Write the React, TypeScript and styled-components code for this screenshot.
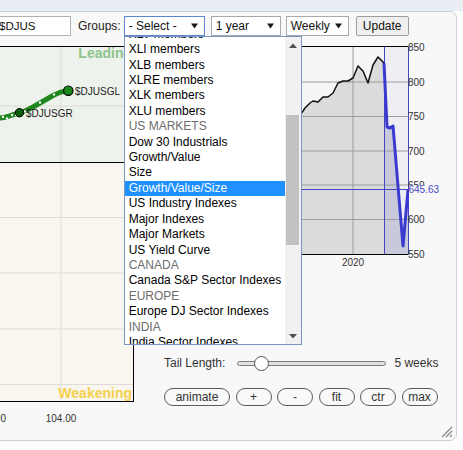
import React from "react";
import styled, { createGlobalStyle } from "styled-components";

const GlobalStyle = createGlobalStyle`
  html, body { margin: 0; padding: 0; }
  body {
    width: 463px;
    height: 450px;
    overflow: hidden;
    background: #fdfdfd;
    font-family: "Liberation Sans", Arial, sans-serif;
    font-size: 12px;
    color: #222;
  }
  * { box-sizing: border-box; }
`;

const TopStrip = styled.div`
  height: 11px;
  background: #e9eef4;
`;

const Card = styled.div`
  position: relative;
  margin: 0 6px 0 -10px;
  border: 1px solid #cdd1d6;
  border-radius: 7px;
  background: #f8f8f9;
  padding: 4px 0 10px 4px;
`;

const Toolbar = styled.div`
  display: flex;
  align-items: stretch;
  height: 20px;
`;

const TextInput = styled.div`
  width: 76px;
  border: 1px solid #b1b1b1;
  background: #fff;
  padding: 0 0 0 3px;
  line-height: 18px;
  font-size: 11.5px;
  color: #111;
  white-space: nowrap;
  overflow: hidden;
`;

const Label = styled.span<{ $ml: number }>`
  margin-left: ${(p) => p.$ml}px;
  line-height: 20px;
  color: #222;
  white-space: nowrap;
`;

const SelectWrap = styled.div<{ $ml: number }>`
  position: relative;
  margin-left: ${(p) => p.$ml}px;
  display: flex;
`;

const SelectBox = styled.div<{ $w: number; $focus?: boolean }>`
  width: ${(p) => p.$w}px;
  border: 1px solid ${(p) => (p.$focus ? "#5b86d3" : "#a9a9a9")};
  background: #fff;
  display: flex;
  align-items: center;
  justify-content: space-between;
  padding: 0 6px 0 4px;
  color: #111;
  white-space: nowrap;
`;

const Caret = () => (
  <svg width="7" height="6" viewBox="0 0 7 6">
    <path d="M0 0.5 L7 0.5 L3.5 5.5 Z" fill="#1a1a1a" />
  </svg>
);

const UpdateButton = styled.div`
  margin-left: 7px;
  width: 53px;
  border: 1px solid #9d9d9d;
  border-radius: 2px;
  background: #efefef;
  display: flex;
  align-items: center;
  justify-content: center;
  color: #111;
`;

const Dropdown = styled.div`
  position: absolute;
  top: 20px;
  left: 0;
  width: 178px;
  height: 309px;
  border: 1px solid #7b95c2;
  background: #fff;
  display: flex;
  z-index: 10;
`;

const ListCol = styled.div`
  width: 160px;
  overflow: hidden;
`;

const List = styled.div`
  margin-top: -10.2px;
`;

const Option = styled.div<{ $header?: boolean; $active?: boolean }>`
  height: 15.42px;
  line-height: 15.42px;
  padding-left: 4px;
  font-size: 12px;
  white-space: nowrap;
  color: ${(p) => (p.$active ? "#fff" : p.$header ? "#6d6d6d" : "#000")};
  background: ${(p) => (p.$active ? "#1e90ff" : "transparent")};
`;

const ScrollBar = styled.div`
  width: 16px;
  background: #f1f1f1;
  display: flex;
  flex-direction: column;
`;

const ScrollArrow = styled.div`
  height: 16px;
  display: flex;
  align-items: center;
  justify-content: center;
`;

const ScrollTrack = styled.div`
  flex: 1;
`;

const ScrollThumb = styled.div`
  margin: 62px 2px 0 1px;
  height: 130px;
  background: #c1c1c1;
`;

const ChartArea = styled.div`
  display: flex;
  align-items: flex-start;
`;

const LeftChartSvg = styled.svg`
  display: block;
  flex: none;
`;

const RightColumn = styled.div`
  flex: 1;
  display: flex;
  flex-direction: column;
`;

const RightChartSvg = styled.svg`
  display: block;
`;

const Controls = styled.div`
  margin-top: 81px;
  padding-left: 24px;
  display: flex;
  flex-direction: column;
`;

const TailRow = styled.div`
  display: flex;
  align-items: center;
  height: 20px;
  color: #333;
`;

const SliderTrack = styled.div`
  position: relative;
  margin-left: 12px;
  width: 149px;
  height: 5px;
  border: 1px solid #7c7c7c;
  border-radius: 3px;
  background: #e2e2e2;
`;

const SliderThumb = styled.div`
  position: absolute;
  top: -6px;
  width: 15px;
  height: 15px;
  border-radius: 50%;
  border: 1px solid #555;
  background: #fff;
`;

const TailValue = styled.span`
  margin-left: 8px;
  color: #333;
`;

const ButtonRow = styled.div`
  margin-top: 15px;
  display: flex;
  gap: 5.5px;
`;

const PillButton = styled.div<{ $w: number }>`
  width: ${(p) => p.$w}px;
  height: 18px;
  border: 1px solid #5a5a5a;
  border-radius: 9px;
  background: #f9f9f9;
  display: flex;
  align-items: center;
  justify-content: center;
  color: #333;
  font-size: 12px;
`;

const Grip = styled.svg`
  position: absolute;
  right: 3px;
  bottom: 2px;
`;

type Opt = { label: string; header?: boolean; active?: boolean };

const options: Opt[] = [
  { label: "XLV members" },
  { label: "XLI members" },
  { label: "XLB members" },
  { label: "XLRE members" },
  { label: "XLK members" },
  { label: "XLU members" },
  { label: "US MARKETS", header: true },
  { label: "Dow 30 Industrials" },
  { label: "Growth/Value" },
  { label: "Size" },
  { label: "Growth/Value/Size", active: true },
  { label: "US Industry Indexes" },
  { label: "Major Indexes" },
  { label: "Major Markets" },
  { label: "US Yield Curve" },
  { label: "CANADA", header: true },
  { label: "Canada S&P Sector Indexes" },
  { label: "EUROPE", header: true },
  { label: "Europe DJ Sector Indexes" },
  { label: "INDIA", header: true },
  { label: "India Sector Indexes" },
];

const FONT = '"Liberation Sans", Arial, sans-serif';

/* ---------- Left RRG chart (svg coords: sx = X + 5, sy = Y - 36) ---------- */
const LX = (x: number) => x + 5;
const LY = (y: number) => y - 36;

const tail: [number, number][] = [
  [-5, 119.5], [0, 118], [4, 117.5], [8, 116.5], [12, 115], [16, 114],
  [19.5, 112.7], [26, 110.5], [33, 107], [40, 103], [47, 99], [54, 95],
  [61, 92], [68.3, 90.7],
];
const tailDots: [number, number][] = [
  [3, 117], [7, 118.5], [12, 115], [16, 115], [25, 111.5], [40, 102.5], [54, 94.5],
];

const LeftChart = () => {
  const pts = tail.map(([x, y]) => `${LX(x)},${LY(y)}`).join(" ");
  const hGrid = [106, 217.5, 273, 329, 384.5];
  return (
    <LeftChartSvg width={145} height={394} viewBox="0 0 145 394">
      <rect x={0} y={LY(46.5)} width={LX(133.5)} height={116} fill="#eef2ec" />
      <rect x={0} y={LY(162.5)} width={LX(133.5)} height={239} fill="#f9f6ef" />
      {hGrid.map((y) => (
        <line key={y} x1={0} x2={LX(133.5)} y1={LY(y)} y2={LY(y)} stroke="#dddbd5" strokeWidth={1} />
      ))}
      <line x1={LX(61)} x2={LX(61)} y1={LY(46.5)} y2={LY(401.5)} stroke="#dddbd5" strokeWidth={1} />
      <line x1={0} x2={LX(133.5)} y1={LY(46.5)} y2={LY(46.5)} stroke="#000" strokeWidth={1} />
      <line x1={0} x2={LX(133.5)} y1={LY(162.5)} y2={LY(162.5)} stroke="#000" strokeWidth={1} />
      <line x1={0} x2={LX(134)} y1={LY(401.5)} y2={LY(401.5)} stroke="#000" strokeWidth={1} />
      <line x1={LX(133.5)} x2={LX(133.5)} y1={LY(46.5)} y2={LY(401.5)} stroke="#000" strokeWidth={1} />
      <text x={LX(132)} y={LY(58)} textAnchor="end" fontFamily={FONT} fontSize={14} fontWeight="bold" fill="#8cc48c">
        Leading
      </text>
      <text x={LX(132)} y={LY(397.5)} textAnchor="end" fontFamily={FONT} fontSize={14} fontWeight="bold" fill="#f4d04c">
        Weakening
      </text>
      <polyline points={pts} fill="none" stroke="#1d861d" strokeWidth={5} strokeLinecap="round" strokeLinejoin="round" />
      {tailDots.map(([x, y], i) => (
        <circle key={i} cx={LX(x)} cy={LY(y)} r={1.2} fill="#fff" />
      ))}
      <circle cx={LX(19.5)} cy={LY(112.7)} r={4.2} fill="#0b5e0b" stroke="#000" strokeWidth={1} />
      <circle cx={LX(68.3)} cy={LY(90.7)} r={4.7} fill="#1b8a1b" stroke="#000" strokeWidth={1.2} />
      <text x={LX(75)} y={LY(94.5)} fontFamily={FONT} fontSize={10} fill="#222">$DJUSGL</text>
      <text x={LX(26)} y={LY(116.5)} fontFamily={FONT} fontSize={10} fill="#222">$DJUSGR</text>
      <text x={LX(6)} y={LY(421.5)} textAnchor="end" fontFamily={FONT} fontSize={10} fill="#333">102.00</text>
      <text x={LX(61)} y={LY(421.5)} textAnchor="middle" fontFamily={FONT} fontSize={10} fill="#333">104.00</text>
    </LeftChartSvg>
  );
};

/* ---------- Right price chart (svg coords: sx = X - 140, sy = Y - 36) ---------- */
const RX = (x: number) => x - 140;
const RY = (y: number) => y - 36;

const blackLine: [number, number][] = [
  [145, 160], [160, 150], [175, 141], [190, 145], [205, 135], [220, 128], [235, 122],
  [250, 126], [265, 118], [280, 115], [295, 113], [302, 112.7], [305, 108], [310, 103],
  [313, 101], [318, 102], [323, 97], [328, 97], [333, 93], [338, 83], [343, 81], [348, 81],
  [353, 78], [358, 66], [363, 71], [368, 83], [373, 65], [378, 57], [384, 63],
];
const blueLine: [number, number][] = [
  [384, 63], [387, 127], [390, 128], [393, 126], [403, 246], [408, 190],
];

const RightChart = () => {
  const bPts = blackLine.map(([x, y]) => `${RX(x)},${RY(y)}`).join(" ");
  const uPts = blueLine.map(([x, y]) => `${RX(x)},${RY(y)}`).join(" ");
  const bottom = RY(254);
  const bFill = `${RX(145)},${bottom} ${bPts} ${RX(384)},${bottom}`;
  const uFill = `${RX(384)},${bottom} ${uPts} ${RX(408)},${bottom}`;
  const ticks: [string, number][] = [
    ["850", 47], ["800", 82], ["750", 116.5], ["700", 151], ["650", 185], ["600", 219.5], ["550", 254],
  ];
  return (
    <RightChartSvg width={316} height={236} viewBox="0 0 316 236">
      <rect x={RX(145)} y={RY(46.5)} width={263} height={207.5} fill="#f5f5f5" />
      <rect x={RX(384)} y={RY(46.5)} width={24} height={207.5} fill="#eeeef3" />
      <polygon points={bFill} fill="#dbdbdb" />
      <polygon points={uFill} fill="#c9cad9" />
      {[82, 116.5, 151, 185, 219.5].map((y) => (
        <line key={y} x1={RX(145)} x2={RX(408)} y1={RY(y)} y2={RY(y)} stroke="#9c9c9c" strokeWidth={1} />
      ))}
      <line x1={RX(353)} x2={RX(353)} y1={RY(46.5)} y2={RY(254)} stroke="#9c9c9c" strokeWidth={1} />
      <line x1={RX(145)} x2={RX(408.5)} y1={RY(46.5)} y2={RY(46.5)} stroke="#000" strokeWidth={1.2} />
      <line x1={RX(145)} x2={RX(408.5)} y1={RY(254.5)} y2={RY(254.5)} stroke="#000" strokeWidth={1.2} />
      <line x1={RX(384.5)} x2={RX(384.5)} y1={RY(46.5)} y2={RY(254.5)} stroke="#4545c4" strokeWidth={1} />
      <line x1={RX(408.5)} x2={RX(408.5)} y1={RY(46.5)} y2={RY(254.5)} stroke="#4545c4" strokeWidth={1} />
      <line x1={RX(145)} x2={RX(408.5)} y1={RY(189.5)} y2={RY(189.5)} stroke="#4545c4" strokeWidth={1} />
      <polyline points={bPts} fill="none" stroke="#111" strokeWidth={1.5} strokeLinejoin="round" />
      <polyline points={uPts} fill="none" stroke="#3a3ad0" strokeWidth={3} strokeLinejoin="round" />
      {ticks.map(([t, y]) => (
        <text key={t} x={RX(408)} y={RY(y + 3.6)} fontFamily={FONT} fontSize={10} fill="#333">
          {t}
        </text>
      ))}
      <rect x={RX(409)} y={RY(185.5)} width={34} height={8.5} fill="#f8f8f9" />
      <text x={RX(408.5)} y={RY(193)} fontFamily={FONT} fontSize={10} fill="#4a4ac4">645.63</text>
      <text x={RX(353)} y={RY(265.5)} textAnchor="middle" fontFamily={FONT} fontSize={10} fill="#333">2020</text>
    </RightChartSvg>
  );
};

const ArrowUp = () => (
  <svg width="8" height="5" viewBox="0 0 8 5">
    <path d="M0 5 L4 0.5 L8 5 Z" fill="#505050" />
  </svg>
);
const ArrowDown = () => (
  <svg width="8" height="5" viewBox="0 0 8 5">
    <path d="M0 0 L8 0 L4 4.5 Z" fill="#505050" />
  </svg>
);

export default function App() {
  return (
    <>
      <GlobalStyle />
      <TopStrip />
      <Card>
        <Toolbar>
          <TextInput>$DJUS</TextInput>
          <Label $ml={7}>Groups:</Label>
          <SelectWrap $ml={3}>
            <SelectBox $w={81} $focus>
              <span>- Select -</span>
              <Caret />
            </SelectBox>
            <Dropdown>
              <ListCol>
                <List>
                  {options.map((o) => (
                    <Option key={o.label} $header={o.header} $active={o.active}>
                      {o.label}
                    </Option>
                  ))}
                </List>
              </ListCol>
              <ScrollBar>
                <ScrollArrow>
                  <ArrowUp />
                </ScrollArrow>
                <ScrollTrack>
                  <ScrollThumb />
                </ScrollTrack>
                <ScrollArrow>
                  <ArrowDown />
                </ScrollArrow>
              </ScrollBar>
            </Dropdown>
          </SelectWrap>
          <SelectWrap $ml={6}>
            <SelectBox $w={70}>
              <span>1 year</span>
              <Caret />
            </SelectBox>
          </SelectWrap>
          <SelectWrap $ml={5}>
            <SelectBox $w={63}>
              <span>Weekly</span>
              <Caret />
            </SelectBox>
          </SelectWrap>
          <UpdateButton>Update</UpdateButton>
        </Toolbar>
        <ChartArea>
          <LeftChart />
          <RightColumn>
            <RightChart />
            <Controls>
              <TailRow>
                <span>Tail Length:</span>
                <SliderTrack>
                  <SliderThumb style={{ left: 16 }} />
                </SliderTrack>
                <TailValue>5 weeks</TailValue>
              </TailRow>
              <ButtonRow>
                <PillButton $w={66}>animate</PillButton>
                <PillButton $w={36}>+</PillButton>
                <PillButton $w={36}>-</PillButton>
                <PillButton $w={36}>fit</PillButton>
                <PillButton $w={36}>ctr</PillButton>
                <PillButton $w={36}>max</PillButton>
              </ButtonRow>
            </Controls>
          </RightColumn>
        </ChartArea>
        <Grip width="13" height="13" viewBox="0 0 13 13">
          <line x1="12" y1="2" x2="2" y2="12" stroke="#8a8a8a" strokeWidth="1.2" />
          <line x1="12" y1="6" x2="6" y2="12" stroke="#8a8a8a" strokeWidth="1.2" />
          <line x1="12" y1="10" x2="10" y2="12" stroke="#8a8a8a" strokeWidth="1.2" />
        </Grip>
      </Card>
    </>
  );
}
